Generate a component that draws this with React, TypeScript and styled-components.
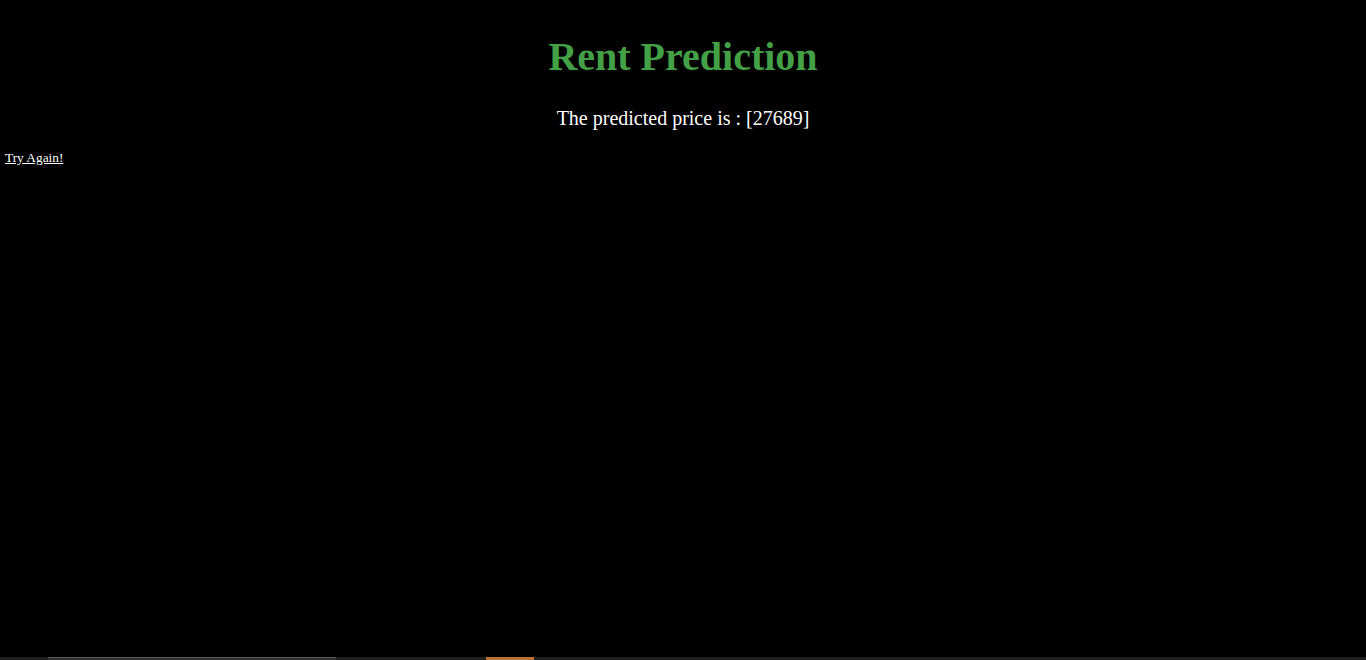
import React from "react";
import styled, { createGlobalStyle } from "styled-components";

const Global = createGlobalStyle`
  html, body { margin: 0; padding: 0; background: #000; height: 100%; }
  #root { height: 100%; }
`;

const Page = styled.div`
  height: 660px;
  background: #000;
  display: flex;
  flex-direction: column;
  font-family: "Liberation Serif", "Times New Roman", serif;
  color: #fff;
`;

const Main = styled.main`
  flex: 1;
  padding: 0 5px;
`;

const Title = styled.h1`
  margin: 34px 0 0;
  text-align: center;
  font-size: 40px;
  line-height: 46px;
  font-weight: bold;
  color: #43a047;
`;

const Result = styled.p`
  margin: 26px 0 0;
  text-align: center;
  font-size: 20px;
  line-height: 24px;
`;

const Link = styled.a`
  display: inline-block;
  margin-top: 20px;
  font-size: 13.33px;
  color: #fff;
  text-decoration: underline;
`;

const Taskbar = styled.div`
  height: 3px;
  background: #202020;
  display: flex;
  align-items: stretch;
`;

const Slot = styled.div<{ $left: number; $width: number; $color: string; $border?: string }>`
  margin-left: ${(p) => p.$left}px;
  width: ${(p) => p.$width}px;
  background: ${(p) => p.$color};
  border-top: 1px solid ${(p) => p.$border ?? p.$color};
  box-sizing: border-box;
`;

export default function App() {
  return (
    <>
      <Global />
      <Page>
        <Main>
          <Title>Rent Prediction</Title>
          <Result>The predicted price is : [27689]</Result>
          <Link href="#">Try Again!</Link>
        </Main>
        <Taskbar>
          <Slot $left={48} $width={288} $color="#2e2e2e" $border="#5a5a5a" />
          <Slot $left={150} $width={48} $color="#b87333" />
        </Taskbar>
      </Page>
    </>
  );
}
